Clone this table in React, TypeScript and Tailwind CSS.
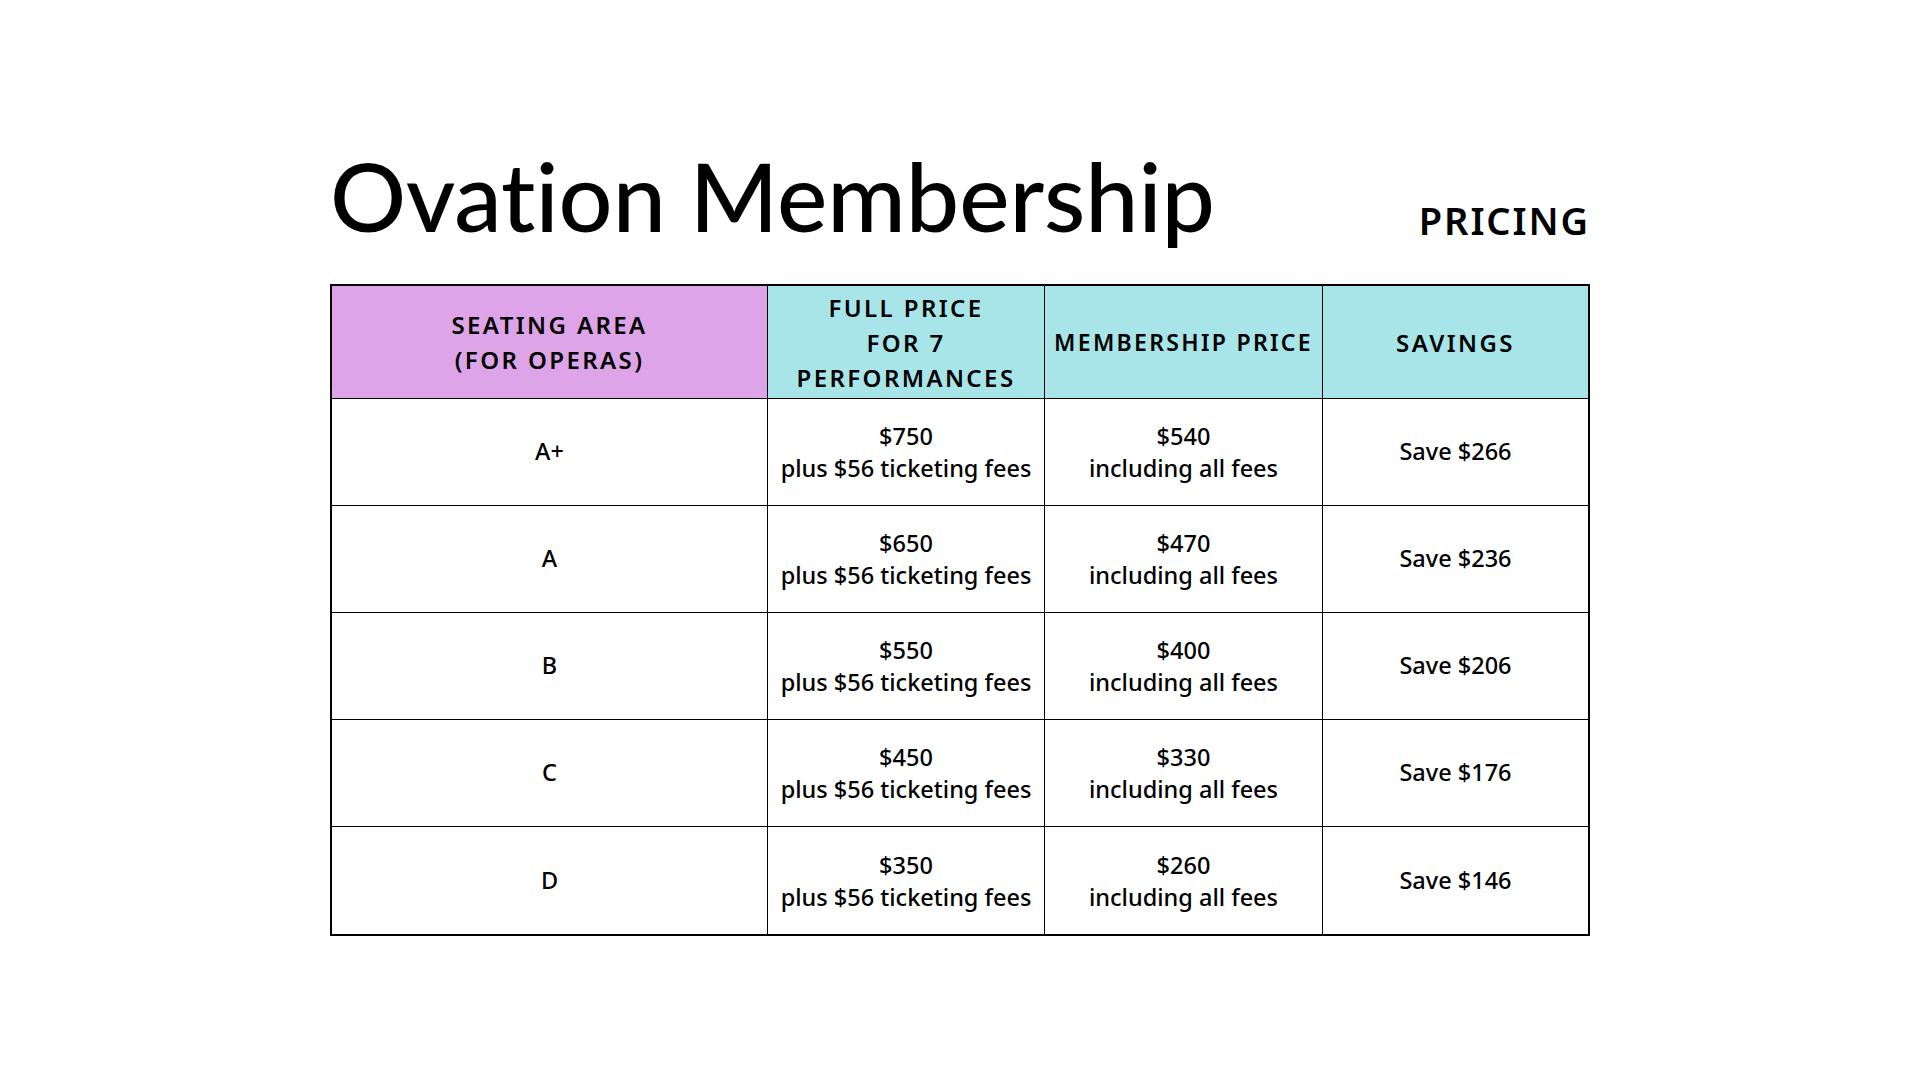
import React from "react";

const rows = [
  ["A+", "$750", "$540", "Save $266"],
  ["A", "$650", "$470", "Save $236"],
  ["B", "$550", "$400", "Save $206"],
  ["C", "$450", "$330", "Save $176"],
  ["D", "$350", "$260", "Save $146"],
];

export default function App() {
  return (
    <div className="w-[1920px] h-[1080px] bg-white text-black font-['Noto_Sans',sans-serif] overflow-hidden">
      <div className="pt-[148px] pl-[330px]">
        <div className="w-[1260px]">
          <div className="flex items-end justify-between">
            <h1 className="font-['Lato',sans-serif] text-[95px] leading-none font-medium [font-variant-ligatures:none]">Ovation Membership</h1>
            <div className="text-[38px] leading-none font-semibold tracking-[0.05em] mb-[4px]">PRICING</div>
          </div>
          <div className="mt-[41px] border-2 border-black grid grid-cols-[436px_277px_278px_1fr]">
            <div className="h-[113px] bg-[#dea4e8] border-r-[1.5px] border-b-[1.5px] border-black flex items-center justify-center text-center text-[24px] leading-[35px] font-semibold tracking-[0.1em]">
              <div>SEATING AREA<br />(FOR OPERAS)</div>
            </div>
            <div className="h-[113px] bg-[#a8e5e8] border-r-[1.5px] border-b-[1.5px] border-black flex items-center justify-center text-center text-[24px] leading-[35px] font-semibold tracking-[0.1em]">
              <div>FULL PRICE<br />FOR 7<br />PERFORMANCES</div>
            </div>
            <div className="h-[113px] bg-[#a8e5e8] border-r-[1.5px] border-b-[1.5px] border-black flex items-center justify-center text-center text-[23px] leading-[35px] font-semibold tracking-[0.1em] whitespace-nowrap">
              <div>MEMBERSHIP PRICE</div>
            </div>
            <div className="h-[113px] bg-[#a8e5e8] border-b-[1.5px] border-black flex items-center justify-center text-center text-[24px] leading-[35px] font-semibold tracking-[0.1em]">
              <div>SAVINGS</div>
            </div>
            {rows.map((r, i) => {
              const last = i === rows.length - 1;
              const b = last ? "" : "border-b-[1.5px]";
              return (
                <React.Fragment key={r[0]}>
                  <div className={`h-[107px] border-r-[1.5px] border-black ${b} flex items-center justify-center text-[23.5px] font-medium`}>
                    {r[0]}
                  </div>
                  <div className={`h-[107px] border-r-[1.5px] border-black ${b} flex items-center justify-center text-center text-[23.5px] leading-[32px] font-medium`}>
                    <div>
                      {r[1]}
                      <br />
                      plus $56 ticketing fees
                    </div>
                  </div>
                  <div className={`h-[107px] border-r-[1.5px] border-black ${b} flex items-center justify-center text-center text-[23.5px] leading-[32px] font-medium`}>
                    <div>
                      {r[2]}
                      <br />
                      including all fees
                    </div>
                  </div>
                  <div className={`h-[107px] border-black ${b} flex items-center justify-center text-[23.5px] font-medium`}>
                    {r[3]}
                  </div>
                </React.Fragment>
              );
            })}
          </div>
        </div>
      </div>
    </div>
  );
}
